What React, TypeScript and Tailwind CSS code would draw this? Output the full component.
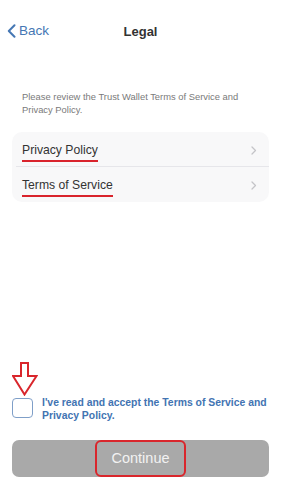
import React from 'react';

const font = { fontFamily: '"Liberation Sans", Arial, sans-serif' };

// Single row inside the legal links card
const LegalRow: React.FC<{ label: string; divider?: boolean }> = ({ label, divider = false }) => (
  <div className="relative flex h-[35px] items-center justify-between pl-[10px] pr-[12px]">
    <span className="inline-block border-b-2 border-[#d9232c] pb-[3px] pt-[5px] text-[12.2px] leading-[14px] text-[#333333]">
      {label}
    </span>
    <svg width="6" height="9" viewBox="0 0 6 9" fill="none" className="mt-[1px]">
      <path d="M1 1l3.5 3.5L1 8" stroke="#c4c4c8" strokeWidth="1.3" strokeLinecap="round" strokeLinejoin="round" />
    </svg>
    {divider && <div className="absolute bottom-0 left-[4px] right-0 h-px bg-[#e6e6ea]" />}
  </div>
);

export default function App() {
  return (
    <div className="flex h-[500px] w-[281px] flex-col bg-white" style={font}>
      {/* Nav bar */}
      <div className="grid h-[62px] grid-cols-[1fr_auto_1fr] items-center">
        <div className="flex items-center gap-[3px] pl-[7px] text-[#4577b4]">
          <svg width="9" height="14" viewBox="0 0 9 14" fill="none">
            <path d="M7.5 1.2L1.8 7l5.7 5.8" stroke="currentColor" strokeWidth="2" strokeLinecap="round" strokeLinejoin="round" />
          </svg>
          <span className="text-[13.5px] leading-none">Back</span>
        </div>
        <span className="text-[13px] font-bold leading-none text-[#333333]">Legal</span>
        <div />
      </div>

      {/* Intro */}
      <p className="pl-[22px] pr-[30px] pt-[29px] text-[9.4px] leading-[12.5px] text-[#7a7a7a]">
        Please review the Trust Wallet Terms of Service and Privacy Policy.
      </p>

      {/* Links card */}
      <div className="mx-[12px] mt-[16px] rounded-[10px] bg-[#f8f8f9]">
        <LegalRow label="Privacy Policy" divider />
        <LegalRow label="Terms of Service" />
      </div>

      <div className="flex-1" />

      {/* Arrow annotation */}
      <div className="pl-[12px]">
        <svg width="26" height="34" viewBox="0 0 26 34" fill="none" className="block">
          <path d="M9 1h7v13h8.5L12.5 32.5 1 14h8z" stroke="#d9262c" strokeWidth="2" strokeLinejoin="miter" />
        </svg>
      </div>

      {/* Accept checkbox */}
      <div className="flex items-start gap-[9px] pl-[12px] pr-[8px]">
        <div className="mt-[2.5px] h-[20px] w-[21px] shrink-0 rounded-[4px] border border-[#7f9fc8]" />
        <p className="text-[10.4px] font-bold leading-[13px] text-[#4274b2]">
          I've read and accept the Terms of Service and Privacy Policy.
        </p>
      </div>

      {/* Continue */}
      <div className="mx-[12px] mb-[23px] mt-[18.5px] flex h-[37px] items-center justify-center rounded-[7px] bg-[#a9a9a9]">
        <div className="flex h-[37px] w-[91px] items-center justify-center rounded-[6px] border-2 border-[#d9262c]">
          <span className="text-[14.5px] text-[#f2f2f2]">Continue</span>
        </div>
      </div>
    </div>
  );
}
